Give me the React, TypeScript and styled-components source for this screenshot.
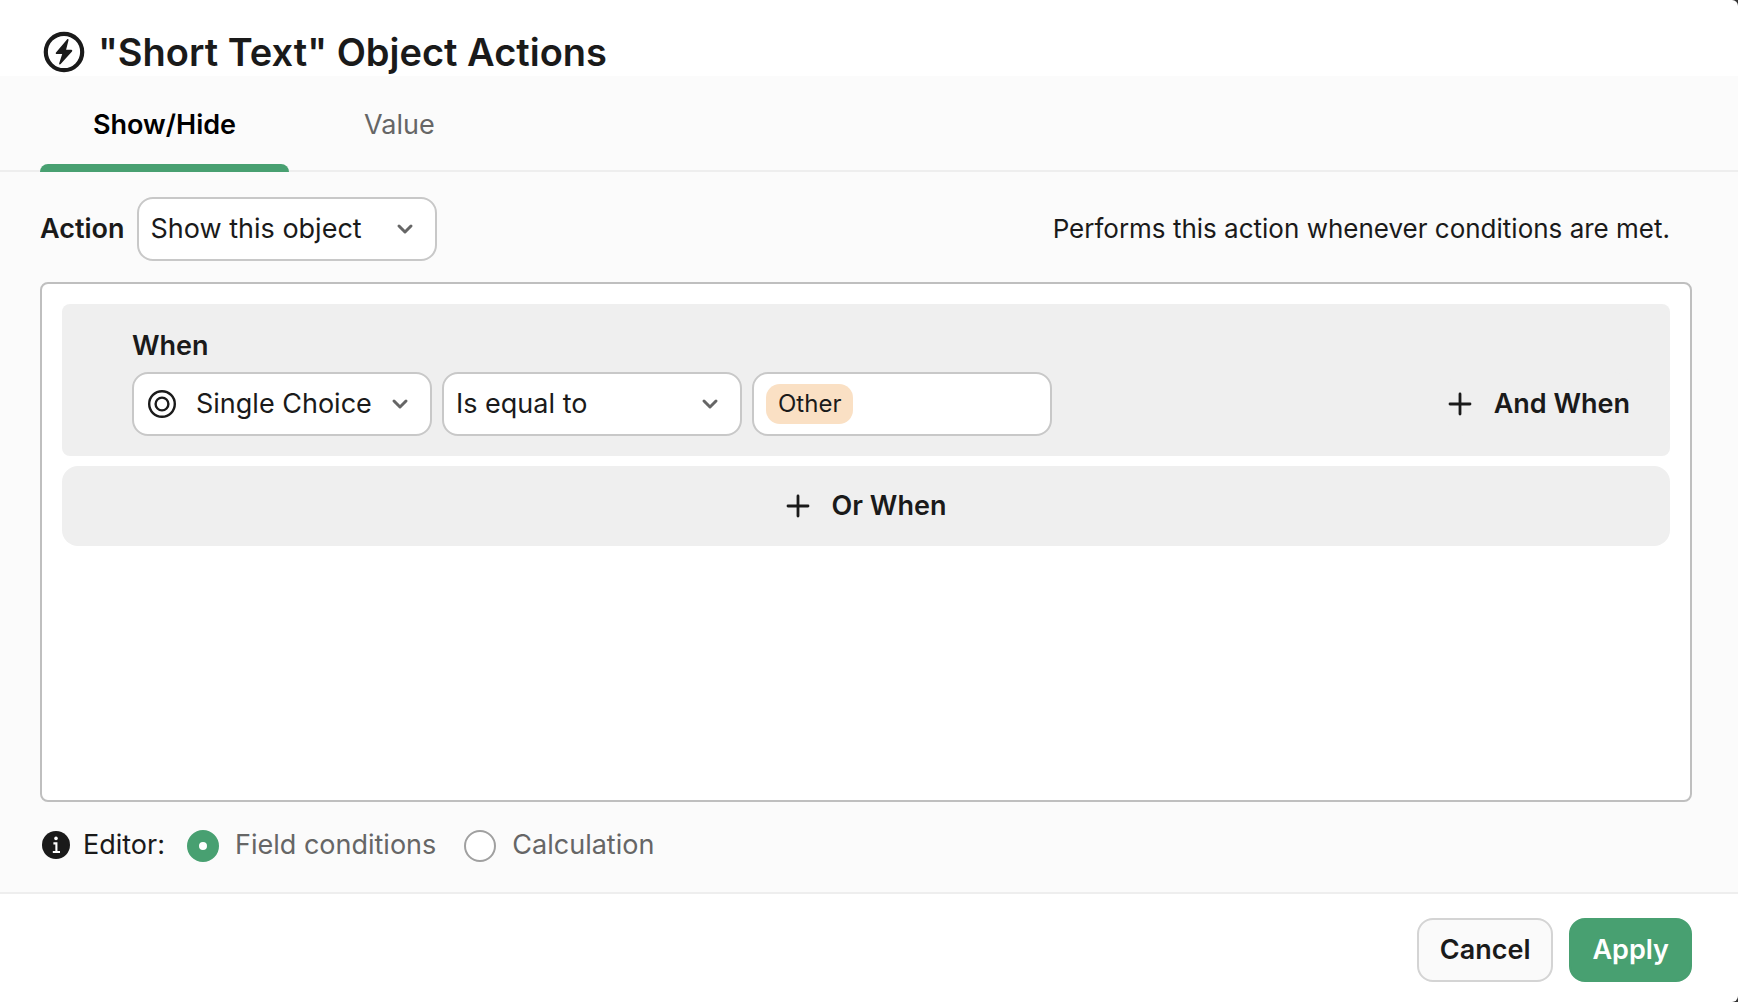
import React, { useState } from "react";
import styled, { createGlobalStyle } from "styled-components";

const GlobalStyle = createGlobalStyle`
  *, *::before, *::after { box-sizing: border-box; }
  body {
    margin: 0;
    background: #333333;
    color: #1a1a1a;
    font-family: Inter, "Liberation Sans", sans-serif;
    font-size: 27px;
    line-height: 36px;
  }
  button, select, input { font: inherit; color: inherit; }
`;

const Dialog = styled.main`
  display: flex;
  flex-direction: column;
  min-height: 100vh;
  background: #ffffff;
  border-radius: 0 6px 6px 0;
`;

const Header = styled.header`
  display: flex;
  align-items: center;
  gap: 12px;
  padding: 28px 42px 0;
`;

const Title = styled.h1`
  margin: 0;
  font-size: 38px;
  line-height: 48px;
  font-weight: 600;
`;

const TabList = styled.nav`
  display: flex;
  gap: 22px;
  height: 96px;
  padding: 0 40px;
  background: #fbfbfb;
  box-shadow: inset 0 -2px #eeeeee;
`;

const Tab = styled.button<{ $active: boolean }>`
  display: flex;
  flex-direction: column;
  justify-content: flex-end;
  padding: 0;
  border: 0;
  background: none;
  color: ${(p) => (p.$active ? "#000000" : "#666666")};
  font-weight: ${(p) => (p.$active ? 600 : 400)};
  cursor: pointer;

  &::after {
    content: "";
    width: 100%;
    height: 8px;
    margin-top: 21px;
    border-radius: 8px 8px 0 0;
    background: ${(p) => (p.$active ? "#48a071" : "transparent")};
  }
`;

const TabText = styled.span`
  padding: 0 53px;
`;

const Body = styled.section`
  flex: 1;
  display: flex;
  flex-direction: column;
  padding: 24px 46px 29px 40px;
  background: #fbfbfb;
`;

const ActionRow = styled.div`
  display: flex;
  align-items: center;
  gap: 12px;
  padding: 1px 22px 0 0;
`;

const ActionLabel = styled.label`
  font-weight: 600;
`;

const Hint = styled.p`
  margin: 0 0 0 auto;
  font-size: 26px;
`;

const SelectBox = styled.div`
  position: relative;
  width: 300px;
`;

const Select = styled.select<{ $icon?: boolean }>`
  appearance: none;
  width: 100%;
  height: 64px;
  padding: 0 48px 0 ${(p) => (p.$icon ? 62 : 12)}px;
  border: 2px solid #c8c8c8;
  border-radius: 16px;
  background: #ffffff;
`;

const Chevron = styled.svg`
  position: absolute;
  right: 22px;
  top: 22px;
  pointer-events: none;
`;

const LeadIcon = styled.svg`
  position: absolute;
  left: 16px;
  top: 18px;
  pointer-events: none;
`;

const Panel = styled.div`
  flex: 1;
  display: flex;
  flex-direction: column;
  gap: 10px;
  margin-top: 21px;
  padding: 20px;
  border: 2px solid #bfbfbf;
  border-radius: 8px;
  background: #ffffff;
`;

const Group = styled.fieldset`
  margin: 0;
  min-width: 0;
  padding: 24px 40px 20px 70px;
  border: 0;
  border-radius: 8px;
  background: #efefef;
`;

const GroupTitle = styled.div`
  margin-bottom: 8px;
  font-weight: 600;
`;

const Condition = styled.div`
  display: flex;
  align-items: center;
  gap: 10px;
`;

const ValueField = styled.div`
  display: flex;
  align-items: center;
  gap: 8px;
  width: 300px;
  height: 64px;
  padding: 0 12px;
  border: 2px solid #c8c8c8;
  border-radius: 16px;
  background: #ffffff;
`;

const Chip = styled.span`
  padding: 0 12px;
  border-radius: 14px;
  background: #fae0c4;
  font-size: 24px;
  line-height: 40px;
`;

const ValueInput = styled.input`
  flex: 1;
  min-width: 0;
  padding: 0;
  border: 0;
  outline: 0;
  background: none;
`;

const AddButton = styled.button<{ $wide?: boolean }>`
  display: flex;
  align-items: center;
  justify-content: center;
  gap: 22px;
  height: ${(p) => (p.$wide ? 80 : 64)}px;
  margin-left: ${(p) => (p.$wide ? "0" : "auto")};
  padding: 0;
  border: 0;
  border-radius: 16px;
  background: #efefef;
  font-weight: 600;
  cursor: pointer;
`;

const EditorRow = styled.div`
  display: flex;
  align-items: center;
  margin-top: 25px;
  padding-left: 2px;
`;

const EditorLabel = styled.span`
  margin: 0 22px 0 13px;
`;

const RadioLabel = styled.label`
  display: flex;
  align-items: center;
  gap: 16px;
  margin-right: 28px;
  color: #666666;
`;

const Radio = styled.input`
  appearance: none;
  width: 32px;
  height: 32px;
  margin: 2px 0 0;
  border: 2px solid #a0a0a0;
  border-radius: 50%;
  background: #ffffff;

  &:checked {
    border: 12px solid #48a071;
  }
`;

const Footer = styled.footer`
  display: flex;
  justify-content: flex-end;
  gap: 16px;
  padding: 24px 46px 20px;
  border-top: 2px solid #eeeeee;
`;

const FooterButton = styled.button<{ $primary?: boolean }>`
  height: 64px;
  padding: 0 21px;
  border: 2px solid ${(p) => (p.$primary ? "#48a071" : "#d4d4d4")};
  border-radius: 16px;
  background: ${(p) => (p.$primary ? "#48a071" : "#fafafa")};
  color: ${(p) => (p.$primary ? "#ffffff" : "#1a1a1a")};
  font-weight: 600;
  cursor: pointer;
`;

function BoltIcon() {
  return (
    <svg width="44" height="44" viewBox="0 0 44 44" aria-hidden="true">
      <circle cx="22" cy="22" r="18.2" fill="none" stroke="#1a1a1a" strokeWidth="4.2" />
      <path
        d="M25 9.4 14 22.4c-.6.8-.2 1.6.7 1.6h5.5l-3 9.2c-.3 1.2.8 1.7 1.5.8L30 21.4c.6-.8.2-1.6-.7-1.6h-5.2l2.4-9.6c.2-1.1-.8-1.6-1.5-.8z"
        fill="#1a1a1a"
      />
    </svg>
  );
}

function ChevronIcon() {
  return (
    <Chevron width="20" height="20" viewBox="0 0 20 20" aria-hidden="true">
      <path d="M4 7l6 6 6-6" fill="none" stroke="#666666" strokeWidth="3" strokeLinecap="round" strokeLinejoin="round" />
    </Chevron>
  );
}

function TargetIcon() {
  return (
    <LeadIcon width="28" height="28" viewBox="0 0 28 28" fill="none" stroke="#1a1a1a" strokeWidth="2.4" aria-hidden="true">
      <circle cx="14" cy="14" r="12.8" />
      <circle cx="14" cy="14" r="6.4" />
    </LeadIcon>
  );
}

function PlusIcon() {
  return (
    <svg width="24" height="24" viewBox="0 0 24 24" aria-hidden="true">
      <path d="M12 2v20M2 12h20" stroke="#1a1a1a" strokeWidth="2.8" strokeLinecap="round" />
    </svg>
  );
}

function InfoIcon() {
  return (
    <svg width="28" height="28" viewBox="0 0 28 28" aria-hidden="true">
      <circle cx="14" cy="14" r="14" fill="#1a1a1a" />
      <circle cx="14" cy="7.4" r="1.8" fill="#ffffff" />
      <path d="M11.4 12.4h3v8.4M10.8 21h7.2" fill="none" stroke="#ffffff" strokeWidth="2.1" />
    </svg>
  );
}

const TABS = ["Show/Hide", "Value"];
const EDITORS = ["Field conditions", "Calculation"];

export default function App() {
  const [tab, setTab] = useState(TABS[0]);
  const [editor, setEditor] = useState(EDITORS[0]);

  return (
    <>
      <GlobalStyle />
      <Dialog>
        <Header>
          <BoltIcon />
          <Title>"Short Text" Object Actions</Title>
        </Header>
        <TabList>
          {TABS.map((name) => (
            <Tab key={name} type="button" $active={tab === name} onClick={() => setTab(name)}>
              <TabText>{name}</TabText>
            </Tab>
          ))}
        </TabList>
        <Body>
          <ActionRow>
            <ActionLabel htmlFor="action">Action</ActionLabel>
            <SelectBox>
              <Select id="action">
                <option>Show this object</option>
              </Select>
              <ChevronIcon />
            </SelectBox>
            <Hint>Performs this action whenever conditions are met.</Hint>
          </ActionRow>
          <Panel>
            <Group aria-labelledby="when">
              <GroupTitle id="when">When</GroupTitle>
              <Condition>
                <SelectBox>
                  <Select $icon aria-label="Field">
                    <option>Single Choice</option>
                  </Select>
                  <TargetIcon />
                  <ChevronIcon />
                </SelectBox>
                <SelectBox>
                  <Select aria-label="Comparison">
                    <option>Is equal to</option>
                  </Select>
                  <ChevronIcon />
                </SelectBox>
                <ValueField>
                  <Chip>Other</Chip>
                  <ValueInput type="text" aria-label="Value" />
                </ValueField>
                <AddButton type="button">
                  <PlusIcon />
                  And When
                </AddButton>
              </Condition>
            </Group>
            <AddButton type="button" $wide>
              <PlusIcon />
              Or When
            </AddButton>
          </Panel>
          <EditorRow role="radiogroup" aria-labelledby="editor">
            <InfoIcon />
            <EditorLabel id="editor">Editor:</EditorLabel>
            {EDITORS.map((name) => (
              <RadioLabel key={name}>
                <Radio type="radio" name="editor" checked={editor === name} onChange={() => setEditor(name)} />
                {name}
              </RadioLabel>
            ))}
          </EditorRow>
        </Body>
        <Footer>
          <FooterButton type="button">Cancel</FooterButton>
          <FooterButton type="button" $primary>
            Apply
          </FooterButton>
        </Footer>
      </Dialog>
    </>
  );
}
